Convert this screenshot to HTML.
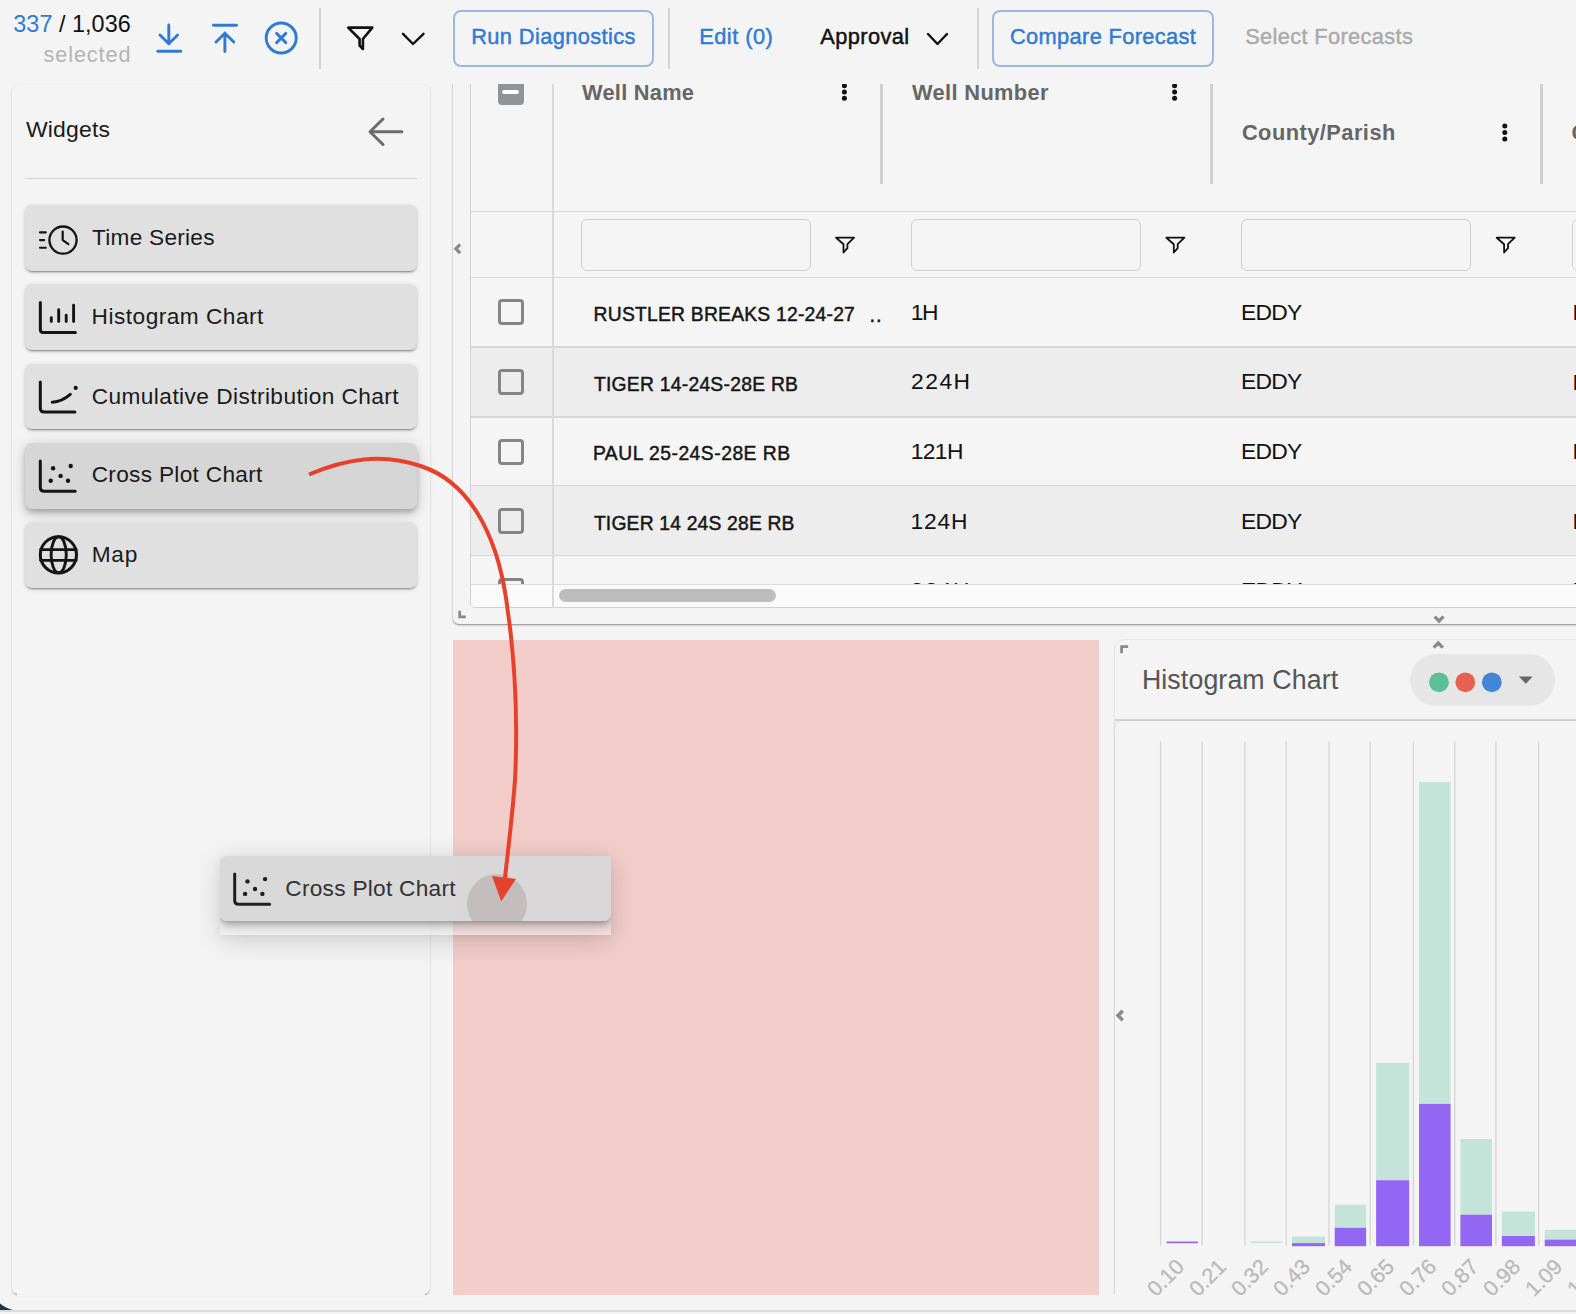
<!DOCTYPE html>
<html><head><meta charset="utf-8">
<style>
*{box-sizing:border-box;margin:0;padding:0}
html,body{width:1576px;height:1314px;overflow:hidden;background:#f4f4f4;font-family:"Liberation Sans",sans-serif;color:#111}
.a{position:absolute}
.t{position:absolute;white-space:nowrap;line-height:1}
.vd{position:absolute;width:2px;background:#d4d4d4}
.btn{position:absolute;border:2px solid #98b9e4;border-radius:8px}
.blue{color:#2f7bd4}
.med{-webkit-text-stroke:0.45px currentColor}
/* left panel */
#panel{position:absolute;left:12px;top:84.5px;width:418px;height:1209.5px;background:#f4f4f4;border-radius:6px;box-shadow:0 2px 1px -1px rgba(0,0,0,.2),0 1px 1px 0 rgba(0,0,0,.14),0 1px 3px 0 rgba(0,0,0,.12)}
.card{position:absolute;left:12.5px;width:392px;height:65.5px;background:#e0e0e0;border-radius:7px;box-shadow:0 3px 1px -2px rgba(0,0,0,.22),0 2px 2px 0 rgba(0,0,0,.14),0 1px 5px 0 rgba(0,0,0,.12)}
.card.hov{background:#d6d6d6;box-shadow:0 3px 5px -1px rgba(0,0,0,.2),0 6px 10px 0 rgba(0,0,0,.14),0 1px 18px 0 rgba(0,0,0,.12)}
.ct{color:#1a1a1a}
.card svg{position:absolute;left:12px;top:13px}
/* table */
#outer{position:absolute;left:453px;top:60px;width:1200px;height:564px;background:#f4f4f4;border-radius:6px;box-shadow:0 1px 2px rgba(0,0,0,.45)}
#tbl{position:absolute;left:470px;top:60px;width:1200px;height:547.5px;background:#f5f5f5;border:1px solid #d2d2d2;border-radius:5px;overflow:hidden}
.hl{position:absolute;left:0;width:1200px;height:2px;background:#d6d6d6}
.row{position:absolute;left:0;width:1200px;height:70px}
.cb{position:absolute;left:27px;width:26px;height:26px;border:3px solid #858585;border-radius:4px}
.wn{position:absolute;left:123px;font-size:19px;letter-spacing:.55px;color:#151515}
.num{position:absolute;font-size:22px;color:#111}
.hdr{position:absolute;font-size:21px;font-weight:bold;color:#666}
.fin{position:absolute;top:158px;width:230px;height:52px;border:1.5px solid #d0d0d0;border-radius:6px}
.kb{position:absolute;width:5px}
.kb i{display:block;width:5px;height:5px;border-radius:50%;background:#111;margin-bottom:1.3px}
</style><style id="fit">
#tb1{left:13.30px!important;top:12.59px!important;font-size:23.4px!important;letter-spacing:0.035px!important}
#tb2{left:43.50px!important;top:44.05px!important;font-size:21.67px!important;letter-spacing:0.898px!important}
#rd{left:471.20px!important;top:26.44px!important;font-size:21.8px!important;letter-spacing:0.399px!important}
#ed{left:699.20px!important;top:26.34px!important;font-size:21.8px!important;letter-spacing:0.486px!important}
#ap{left:820.20px!important;top:26.34px!important;font-size:21.8px!important;letter-spacing:0.416px!important}
#cf{left:1010.00px!important;top:26.24px!important;font-size:21.8px!important;letter-spacing:0.357px!important}
#sf{left:1245.20px!important;top:26.24px!important;font-size:21.8px!important;letter-spacing:0.358px!important}
#wg{left:26.00px!important;top:118.45px!important;font-size:22.97px!important;letter-spacing:0.169px!important}
#c1{left:92.00px!important;top:226.31px!important;font-size:22.67px!important;letter-spacing:0.251px!important}
#c2{left:91.60px!important;top:305.21px!important;font-size:22.67px!important;letter-spacing:0.483px!important}
#c3{left:91.70px!important;top:384.81px!important;font-size:22.67px!important;letter-spacing:0.438px!important}
#c4{left:91.70px!important;top:463.41px!important;font-size:22.67px!important;letter-spacing:0.300px!important}
#c5{left:91.70px!important;top:542.61px!important;font-size:22.67px!important;letter-spacing:0.813px!important}
#h1{left:582.00px!important;top:81.64px!important;font-size:21.8px!important;letter-spacing:0.261px!important}
#h2{left:912.00px!important;top:81.64px!important;font-size:21.8px!important;letter-spacing:0.366px!important}
#h3{left:1241.90px!important;top:122.04px!important;font-size:21.8px!important;letter-spacing:0.471px!important}
#r1{left:593.60px!important;top:305.16px!important;font-size:19.3px!important;letter-spacing:0.232px!important}
#r2{left:593.90px!important;top:374.86px!important;font-size:19.3px!important;letter-spacing:0.263px!important}
#r3{left:592.90px!important;top:444.46px!important;font-size:19.3px!important;letter-spacing:0.507px!important}
#r4{left:593.90px!important;top:513.96px!important;font-size:19.3px!important;letter-spacing:0.187px!important}
#n1{left:910.70px!important;top:300.78px!important;font-size:22.82px!important;letter-spacing:-1.287px!important}
#n2{left:911.10px!important;top:370.38px!important;font-size:22.82px!important;letter-spacing:1.479px!important}
#n3{left:910.70px!important;top:439.88px!important;font-size:22.82px!important;letter-spacing:-0.621px!important}
#n4{left:910.50px!important;top:509.58px!important;font-size:22.82px!important;letter-spacing:0.813px!important}
#e1{left:1241.00px!important;top:300.78px!important;font-size:22.82px!important;letter-spacing:-0.755px!important}
#e2{left:1241.00px!important;top:370.38px!important;font-size:22.82px!important;letter-spacing:-0.755px!important}
#e3{left:1241.00px!important;top:439.98px!important;font-size:22.82px!important;letter-spacing:-0.755px!important}
#e4{left:1241.00px!important;top:509.58px!important;font-size:22.82px!important;letter-spacing:-0.755px!important}
#hc{left:1141.90px!important;top:666.96px!important;font-size:26.74px!important;letter-spacing:0.115px!important}
#dct{left:65.80px!important;top:20.61px!important;font-size:22.67px!important;letter-spacing:0.273px!important}
</style>
</head><body>

<!-- TOP BAR -->
<div class="t" id="tb1"><span class="blue">337</span> / 1,036</div>
<div class="t" id="tb2" style="color:#b5b5b5">selected</div>
<svg class="a" style="left:150px;top:18px" width="40" height="40" viewBox="0 0 40 40">
  <path d="M18.8 7 V25.5 M10 17 L18.8 25.7 L27.6 17" fill="none" stroke="#2f7bd4" stroke-width="2.9" stroke-linecap="round" stroke-linejoin="round"/>
  <path d="M7.8 33.2 H30.8" stroke="#2f7bd4" stroke-width="2.9" stroke-linecap="round"/>
</svg>
<svg class="a" style="left:205px;top:18px" width="40" height="40" viewBox="0 0 40 40">
  <path d="M19.9 33.5 V15 M11 24 L19.9 15.2 L28.8 24" fill="none" stroke="#2f7bd4" stroke-width="2.9" stroke-linecap="round" stroke-linejoin="round"/>
  <path d="M8.5 7.2 H31.5" stroke="#2f7bd4" stroke-width="2.9" stroke-linecap="round"/>
</svg>
<svg class="a" style="left:261px;top:18px" width="40" height="40" viewBox="0 0 40 40">
  <circle cx="20.2" cy="20" r="15" fill="none" stroke="#2f7bd4" stroke-width="2.9"/>
  <path d="M15.6 15.4 L24.8 24.6 M24.8 15.4 L15.6 24.6" stroke="#2f7bd4" stroke-width="2.9" stroke-linecap="round"/>
</svg>
<div class="vd" style="left:319px;top:8px;height:61px"></div>
<svg class="a" style="left:340px;top:18px" width="40" height="40" viewBox="0 0 40 40">
  <path d="M8.2 9.6 H32.3 L22.9 21 V31 L19.6 27.6 V21 Z" fill="none" stroke="#111" stroke-width="2.6" stroke-linejoin="round"/>
</svg>
<svg class="a" style="left:398px;top:18px" width="32" height="40" viewBox="0 0 32 40">
  <path d="M5 15.8 L15 26 L25.5 15.8" fill="none" stroke="#111" stroke-width="2.4" stroke-linecap="round" stroke-linejoin="round"/>
</svg>

<div class="btn" style="left:453px;top:10px;width:201px;height:57px"></div>
<div class="t blue med" id="rd">Run Diagnostics</div>
<div class="vd" style="left:668px;top:8px;height:61px"></div>
<div class="t blue med" id="ed">Edit (0)</div>
<div class="t med" id="ap" style="color:#111">Approval</div>
<svg class="a" style="left:922px;top:18px" width="32" height="40" viewBox="0 0 32 40">
  <path d="M6 16 L15.5 26 L25 16" fill="none" stroke="#111" stroke-width="2.4" stroke-linecap="round" stroke-linejoin="round"/>
</svg>
<div class="vd" style="left:977px;top:8px;height:61px"></div>
<div class="btn" style="left:992px;top:10px;width:222px;height:57px"></div>
<div class="t blue med" id="cf">Compare Forecast</div>
<div class="t med" id="sf" style="color:#ababab">Select Forecasts</div>

<!-- LEFT PANEL -->
<div id="panel">
  <svg class="a" style="left:352px;top:28px" width="46" height="40" viewBox="0 0 46 40">
    <path d="M37.9 18.75 H6.2 M19 6 L6 18.75 L19 31.5" fill="none" stroke="#6b6b6b" stroke-width="3" stroke-linecap="round" stroke-linejoin="round"/>
  </svg>
  <div class="a" style="left:13px;top:93px;width:392px;height:1.5px;background:#d2d2d2"></div>
  <div class="card" style="top:120.5px"></div>
  <div class="card" style="top:199.8px"></div>
  <div class="card" style="top:279.1px"></div>
  <div class="card hov" style="top:358.5px"></div>
  <div class="card" style="top:437.9px"></div>
</div>
<div class="t ct" id="wg">Widgets</div>
<div class="t ct" id="c1">Time Series</div>
<div class="t ct" id="c2">Histogram Chart</div>
<div class="t ct" id="c3">Cumulative Distribution Chart</div>
<div class="t ct" id="c4">Cross Plot Chart</div>
<div class="t ct" id="c5">Map</div>
<!-- panel icons (page coords) -->
<svg class="a" style="left:0;top:0" width="100" height="600" viewBox="0 0 100 600" fill="none" stroke="#141414" stroke-linecap="round" stroke-linejoin="round">
  <!-- time series -->
  <path d="M40 232.4 H45.8 M40 240.1 H44.2 M40 247.8 H45.8" stroke-width="2.1"/>
  <circle cx="63" cy="240.1" r="13.6" stroke-width="2.3"/>
  <path d="M62.7 231.6 V240.1 L68.4 244.2" stroke-width="2.2"/>
  <!-- histogram -->
  <path d="M40.35 302.5 V329.5 Q40.35 332.5 43.35 332.5 H75.4" stroke-width="3"/>
  <path d="M51.3 317.6 V321.5 M58.7 309.8 V321.5 M66.2 315.2 V321.5 M73.6 305.3 V321.5" stroke-width="2.9"/>
  <!-- cumulative -->
  <path d="M40.3 382.1 V408.1 Q40.3 412.1 44.3 412.1 H74.9" stroke-width="3"/>
  <path d="M52.2 402.2 Q62 401.5 70.3 394.3" stroke-width="3"/>
  <circle cx="75.7" cy="387.9" r="2.1" fill="#141414" stroke="none"/>
  <!-- cross plot -->
  <path d="M40.3 461 V487.2 Q40.3 491.2 44.3 491.2 H75.2" stroke-width="3"/>
  <g fill="#141414" stroke="none">
    <circle cx="53.1" cy="468.3" r="2.2"/><circle cx="70.7" cy="466" r="2.2"/><circle cx="60.6" cy="475.9" r="2.2"/><circle cx="50.7" cy="480.8" r="2.2"/><circle cx="68" cy="480.8" r="2.2"/>
  </g>
  <!-- globe -->
  <circle cx="58.4" cy="554.8" r="18.1" stroke-width="3"/>
  <ellipse cx="58.7" cy="554.8" rx="7.6" ry="18" stroke-width="2.9"/>
  <path d="M40.5 549.6 H76.3 M40.5 560.3 H76.3" stroke-width="2.8"/>
</svg>


<!-- MAIN (clipped at y=84) -->
<div class="a" style="left:0;top:0;width:1576px;height:1314px;clip-path:inset(84px 0 0 0)">
  <div id="outer"></div>
  <div id="tbl"></div>
  <div class="a" style="left:471px;top:278.3px;width:1105px;height:69.6px;background:#f5f5f5"></div>
  <div class="a" style="left:471px;top:347.9px;width:1105px;height:69.8px;background:#ededed"></div>
  <div class="a" style="left:471px;top:417.7px;width:1105px;height:68.6px;background:#f5f5f5"></div>
  <div class="a" style="left:471px;top:486.3px;width:1105px;height:70.0px;background:#ededed"></div>
  <div class="a" style="left:471px;top:556.3px;width:1105px;height:28.2px;background:#f5f5f5"></div>
  <div class="a" style="left:471px;top:210.8px;width:1105px;height:1.6px;background:#d8d8d8"></div>
  <div class="a" style="left:471px;top:276.8px;width:1105px;height:1.6px;background:#d8d8d8"></div>
  <div class="a" style="left:471px;top:346.4px;width:1105px;height:1.6px;background:#d8d8d8"></div>
  <div class="a" style="left:471px;top:416.2px;width:1105px;height:1.6px;background:#d8d8d8"></div>
  <div class="a" style="left:471px;top:484.8px;width:1105px;height:1.6px;background:#d8d8d8"></div>
  <div class="a" style="left:471px;top:554.8px;width:1105px;height:1.6px;background:#d8d8d8"></div>
  <div class="a" style="left:552px;top:60px;width:1.5px;height:547px;background:#dadada"></div>
  <div class="a" style="left:879.5px;top:60px;width:3px;height:123.5px;background:#d0d0d0"></div>
  <div class="a" style="left:1210px;top:60px;width:3px;height:123.5px;background:#d0d0d0"></div>
  <div class="a" style="left:1540px;top:60px;width:3px;height:123.5px;background:#d0d0d0"></div>
  <div class="hdr t" id="h1">Well Name</div>
  <div class="hdr t" id="h2">Well Number</div>
  <div class="hdr t" id="h3">County/Parish</div>
  <div class="hdr t" style="left:1571.5px;top:122.04px;font-size:21.8px">C</div>
<svg class="a" style="left:0;top:0" width="1576" height="640" viewBox="0 0 1576 640">
<g fill="#111">
<circle cx="844.4" cy="85.8" r="2.5"/><circle cx="844.4" cy="92" r="2.5"/><circle cx="844.4" cy="98.2" r="2.5"/><circle cx="1174.6" cy="85.8" r="2.5"/><circle cx="1174.6" cy="92" r="2.5"/><circle cx="1174.6" cy="98.2" r="2.5"/><circle cx="1504.8" cy="126" r="2.5"/><circle cx="1504.8" cy="132.5" r="2.5"/><circle cx="1504.8" cy="138.9" r="2.5"/>
</g>
<path transform="translate(0.0 0.0)" d="M836.1 237.7 H854.1 L847.4 244.2 V248.2 L843.5 252.5 V244.2 Z" fill="none" stroke="#111" stroke-width="1.8" stroke-linejoin="round"/>
<path transform="translate(330.3 0.0)" d="M836.1 237.7 H854.1 L847.4 244.2 V248.2 L843.5 252.5 V244.2 Z" fill="none" stroke="#111" stroke-width="1.8" stroke-linejoin="round"/>
<path transform="translate(660.6 0.0)" d="M836.1 237.7 H854.1 L847.4 244.2 V248.2 L843.5 252.5 V244.2 Z" fill="none" stroke="#111" stroke-width="1.8" stroke-linejoin="round"/>
</svg>
  <div class="a" style="left:498px;top:60px;width:26px;height:44.8px;background:#929395;border-radius:0 0 4px 4px"></div>
  <div class="a" style="left:502px;top:90px;width:17px;height:3.6px;background:#fff;border-radius:2px"></div>
  <div class="fin" style="left:580.6px;top:218.6px"></div>
  <div class="fin" style="left:911px;top:218.6px"></div>
  <div class="fin" style="left:1241.3px;top:218.6px"></div>
  <div class="fin" style="left:1571.7px;top:218.6px"></div>
  <div class="cb" style="left:498px;top:299.3px"></div>
  <div class="t wn med" id="r1">RUSTLER BREAKS 12-24-27</div>
  <div class="t num" id="n1">1H</div>
  <div class="t num" id="e1">EDDY</div>
  <div class="t num" style="left:1572.4px;top:301.01px;font-size:22.82px">N</div>
  <div class="cb" style="left:498px;top:368.9px"></div>
  <div class="t wn med" id="r2">TIGER 14-24S-28E RB</div>
  <div class="t num" id="n2">224H</div>
  <div class="t num" id="e2">EDDY</div>
  <div class="t num" style="left:1572.4px;top:370.61px;font-size:22.82px">N</div>
  <div class="cb" style="left:498px;top:438.5px"></div>
  <div class="t wn med" id="r3">PAUL 25-24S-28E RB</div>
  <div class="t num" id="n3">121H</div>
  <div class="t num" id="e3">EDDY</div>
  <div class="t num" style="left:1572.4px;top:440.21px;font-size:22.82px">N</div>
  <div class="cb" style="left:498px;top:508.1px"></div>
  <div class="t wn med" id="r4">TIGER 14 24S 28E RB</div>
  <div class="t num" id="n4">124H</div>
  <div class="t num" id="e4">EDDY</div>
  <div class="t num" style="left:1572.4px;top:509.81px;font-size:22.82px">N</div>
  <div class="cb" style="left:498px;top:577.7px"></div>
  <div class="t wn med" style="left:593px;top:583.56px;font-size:19.3px;letter-spacing:0.2px">TIGER 14 24S 28E RB</div>
  <div class="t num" style="left:910.6px;top:579.18px;font-size:22.82px;letter-spacing:1.45px">224H</div>
  <div class="t num" style="left:1241px;top:579.18px;font-size:22.82px;letter-spacing:-0.75px">EDDY</div>
  <div class="t num" style="left:1572.4px;top:579.41px;font-size:22.82px">N</div>
  <div class="t wn med" style="left:869.5px;top:304.52px;font-size:20.06px;letter-spacing:1px">..</div>
  <div class="a" style="left:471px;top:583.5px;width:1105px;height:23px;background:#fafafa;border-top:1.3px solid #dcdcdc;border-bottom-left-radius:4px"></div>
  <div class="a" style="left:552px;top:583.5px;width:1.5px;height:24px;background:#dadada"></div>
  <div class="a" style="left:558.8px;top:589.1px;width:217px;height:12.6px;background:#bdbdbd;border-radius:7px"></div>
</div>


<!-- pink drop zone -->
<div class="a" style="left:453px;top:640px;width:646px;height:654.5px;background:#f2cdca"></div>

<!-- histogram card -->
<div class="a" style="left:0;top:0;width:1576px;height:1294.5px;overflow:hidden">
<div class="a" style="left:1114.5px;top:639.5px;width:520px;height:700px;border-radius:9px;background:#f4f4f4;box-shadow:0 0 1.2px rgba(0,0,0,.22),0 1px 3px rgba(0,0,0,.08)"></div>
<div class="a" style="left:1114.5px;top:719px;width:520px;height:1.8px;background:#d4d4d4"></div>
<div class="a" style="left:1114.5px;top:721px;width:520px;height:620px;border-radius:7px;background:#f4f4f4;box-shadow:0 0 1.2px rgba(0,0,0,.22),0 1px 3px rgba(0,0,0,.06)"></div>
<div class="t" id="hc" style="color:#555">Histogram Chart</div>
<div class="a" style="left:1409.5px;top:653.6px;width:145.2px;height:52.5px;border-radius:27px;background:#e6e6e6"></div>
<svg class="a" style="left:1400px;top:650px" width="176" height="70" viewBox="1400 650 176 70">
  <circle cx="1439" cy="682.3" r="9.9" fill="#5bbf97"/>
  <circle cx="1465.3" cy="682.3" r="9.9" fill="#e8604f"/>
  <circle cx="1491.8" cy="682.3" r="9.9" fill="#4386d7"/>
  <path d="M1518.9 676.5 H1532.7 L1525.8 683.8 Z" fill="#666"/>
</svg>
</div>

<svg class="a" style="left:0;top:0" width="1576" height="1314" viewBox="0 0 1576 1314">
<g fill="#d5d5d5"><rect x="1159.95" y="741.5" width="1.3" height="504"/><rect x="1201.45" y="741.5" width="1.3" height="504"/><rect x="1244.25" y="741.5" width="1.3" height="504"/><rect x="1285.55" y="741.5" width="1.3" height="504"/><rect x="1328.35" y="741.5" width="1.3" height="504"/><rect x="1369.55" y="741.5" width="1.3" height="504"/><rect x="1412.75" y="741.5" width="1.3" height="504"/><rect x="1454.15" y="741.5" width="1.3" height="504"/><rect x="1495.25" y="741.5" width="1.3" height="504"/><rect x="1538.05" y="741.5" width="1.3" height="504"/></g>
<rect x="1166.6" y="1241.5" width="31.3" height="1.7" fill="#9466f4"/><rect x="1166.6" y="1243.2" width="31.3" height="0.8" fill="#c5e4d9"/>
<rect x="1250.7" y="1241.4" width="31.5" height="1.7" fill="#c5e4d9"/>
<rect x="1292" y="1236.5" width="33.0" height="6.6" fill="#c5e4d9"/><rect x="1292" y="1243.1" width="33.0" height="3.1" fill="#9466f4"/>
<rect x="1334.7" y="1204.7" width="31.4" height="23.1" fill="#c5e4d9"/><rect x="1334.7" y="1227.8" width="31.4" height="18.4" fill="#9466f4"/>
<rect x="1376.1" y="1062.8" width="33.1" height="117.4" fill="#c5e4d9"/><rect x="1376.1" y="1180.2" width="33.1" height="66.0" fill="#9466f4"/>
<rect x="1419" y="782.1" width="31.6" height="321.8" fill="#c5e4d9"/><rect x="1419" y="1103.9" width="31.6" height="142.3" fill="#9466f4"/>
<rect x="1460.4" y="1139" width="31.6" height="75.7" fill="#c5e4d9"/><rect x="1460.4" y="1214.7" width="31.6" height="31.5" fill="#9466f4"/>
<rect x="1501.8" y="1211.5" width="33.1" height="24.5" fill="#c5e4d9"/><rect x="1501.8" y="1236" width="33.1" height="10.2" fill="#9466f4"/>
<rect x="1544.7" y="1229.8" width="31.6" height="9.8" fill="#c5e4d9"/><rect x="1544.7" y="1239.6" width="31.6" height="6.6" fill="#9466f4"/>
<g font-family="Liberation Sans" font-size="21.5" fill="#bababa" stroke="#bababa" stroke-width="0.3" text-anchor="end">
<text x="1185.5" y="1268" transform="rotate(-45 1185.5 1268)">0.10</text><text x="1227.5" y="1268" transform="rotate(-45 1227.5 1268)">0.21</text><text x="1269.5" y="1268" transform="rotate(-45 1269.5 1268)">0.32</text><text x="1311.5" y="1268" transform="rotate(-45 1311.5 1268)">0.43</text><text x="1353.5" y="1268" transform="rotate(-45 1353.5 1268)">0.54</text><text x="1395.5" y="1268" transform="rotate(-45 1395.5 1268)">0.65</text><text x="1437.6" y="1268" transform="rotate(-45 1437.6 1268)">0.76</text><text x="1479.6" y="1268" transform="rotate(-45 1479.6 1268)">0.87</text><text x="1521.6" y="1268" transform="rotate(-45 1521.6 1268)">0.98</text><text x="1563.6" y="1268" transform="rotate(-45 1563.6 1268)">1.09</text><text x="1605.6" y="1268" transform="rotate(-45 1605.6 1268)">1.20</text>
</g>
</svg>

<!-- resize/scroll handles -->
<svg class="a" style="left:0;top:0" width="1576" height="1314" viewBox="0 0 1576 1314" fill="#8a8a8a">
  <path d="M459 243.3 L453.5 248.8 L459 254.3 L461.3 252 L458.1 248.8 L461.3 245.6 Z"/>
  <path d="M458.3 610.8 H461 V615.6 H465.8 V618.3 H458.3 Z"/>
  <path d="M1433.5 617.5 L1436 615.6 L1439 618.8 L1442.2 615.6 L1444.7 617.5 L1439 623.5 Z"/>
  <path d="M1432.4 646.7 L1434.9 648.6 L1438.2 645.4 L1441.5 648.6 L1444.1 646.7 L1438.2 640.4 Z"/>
  <path d="M1120.2 645.3 H1128.1 V648 H1123 V653.2 H1120.2 Z"/>
  <path d="M1121.5 1009.6 L1115.6 1015.5 L1121.5 1021.4 L1124 1019 L1120.5 1015.5 L1124 1012 Z"/>
</svg>

<!-- DRAG PREVIEW -->
<div class="a" style="left:219.5px;top:856px;width:391.3px;height:79px;box-shadow:0 5px 30px rgba(0,0,0,.16),0 2px 8px rgba(0,0,0,.05)"></div>
<div class="a" style="left:219.5px;top:856px;width:391.3px;height:79px;overflow:hidden;background:rgba(240,238,238,.5)">
  <div class="a" style="left:0;top:0;width:391.3px;height:65px;border-radius:7px;background:rgba(214,214,214,.9);box-shadow:0 3px 5px -1px rgba(0,0,0,.2),0 6px 10px 0 rgba(0,0,0,.14),0 1px 18px 0 rgba(0,0,0,.12);overflow:hidden">
    <div class="a" style="left:247px;top:18.2px;width:60px;height:60px;border-radius:50%;background:rgba(190,186,185,.85)"></div>
    <div class="t" id="dct" style="color:#323232">Cross Plot Chart</div>
    <svg class="a" style="left:0;top:0" width="100" height="65" viewBox="25.6 442.9 100 65" fill="none" stroke="#1e1e1e" stroke-linecap="round" stroke-linejoin="round">
      <path d="M40.3 461 V487.2 Q40.3 491.2 44.3 491.2 H75.2" stroke-width="3"/>
      <g fill="#1e1e1e" stroke="none">
        <circle cx="53.1" cy="468.3" r="2.2"/><circle cx="70.7" cy="466" r="2.2"/><circle cx="60.6" cy="475.9" r="2.2"/><circle cx="50.7" cy="480.8" r="2.2"/><circle cx="68" cy="480.8" r="2.2"/>
      </g>
    </svg>
  </div>
</div>

<!-- RED ARROW -->
<svg class="a" style="left:0;top:0" width="1576" height="1314" viewBox="0 0 1576 1314">
  <path d="M309 474.5 C345 459 382 452.5 422 466.5 C468 482 496 532 506 598 C515.5 660 518 720 515 780 C512 820 508 850 505 878" fill="none" stroke="#e8412b" stroke-width="4"/>
  <path d="M492 876.1 L516 879.1 L501.2 901.2 Z" fill="#e8412b"/>
</svg>
<div class="a" style="left:17px;top:1292.3px;width:408px;height:4px;background:#f4f4f4"></div>
<!-- bottom line -->
<svg class="a" style="left:0;top:1300px" width="20" height="14" viewBox="0 1300 20 14"><path d="M0 1303.5 Q6 1308.5 14.5 1310.5 L0 1310.5 Z" fill="#1c3747"/></svg>
<div class="a" style="left:0;top:1309.5px;width:1576px;height:2px;background:#dcdcdc"></div>
<div class="a" style="left:0;top:1311.5px;width:1576px;height:3px;background:#f4f4f4"></div>
</body></html>
